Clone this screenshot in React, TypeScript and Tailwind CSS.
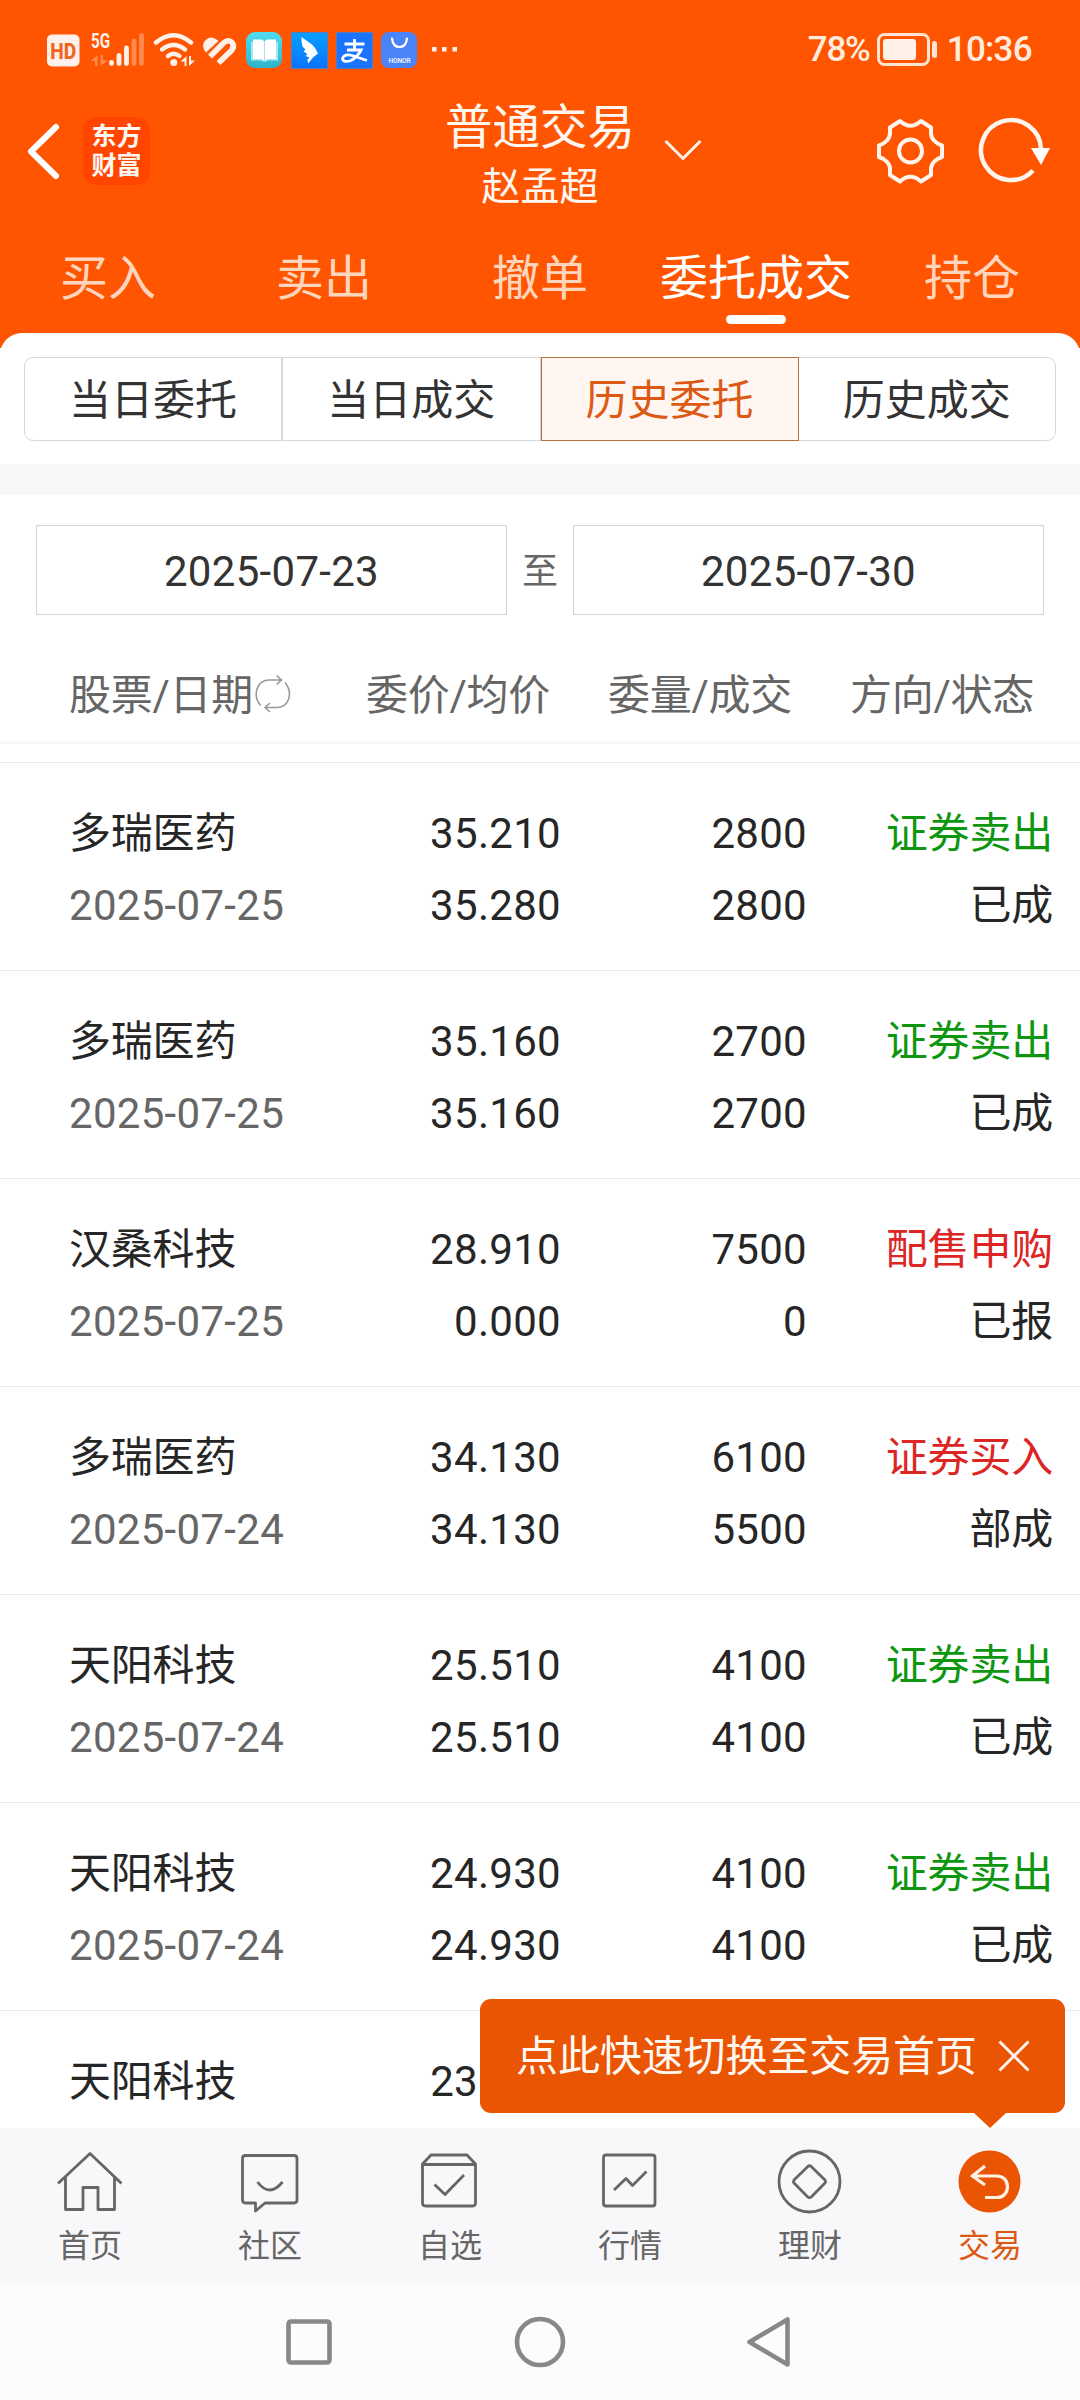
import clsx from "clsx";
import type { ReactNode } from "react";

type Order = {
  name: string;
  date?: string;
  price: string;
  avg?: string;
  amount?: string;
  filled?: string;
  side?: string;
  status?: string;
};

const TABS = ["买入", "卖出", "撤单", "委托成交", "持仓"];
const FILTERS = ["当日委托", "当日成交", "历史委托", "历史成交"];

const ORDERS: Order[] = [
  { name: "多瑞医药", date: "2025-07-25", price: "35.210", avg: "35.280", amount: "2800", filled: "2800", side: "证券卖出", status: "已成" },
  { name: "多瑞医药", date: "2025-07-25", price: "35.160", avg: "35.160", amount: "2700", filled: "2700", side: "证券卖出", status: "已成" },
  { name: "汉桑科技", date: "2025-07-25", price: "28.910", avg: "0.000", amount: "7500", filled: "0", side: "配售申购", status: "已报" },
  { name: "多瑞医药", date: "2025-07-24", price: "34.130", avg: "34.130", amount: "6100", filled: "5500", side: "证券买入", status: "部成" },
  { name: "天阳科技", date: "2025-07-24", price: "25.510", avg: "25.510", amount: "4100", filled: "4100", side: "证券卖出", status: "已成" },
  { name: "天阳科技", date: "2025-07-24", price: "24.930", avg: "24.930", amount: "4100", filled: "4100", side: "证券卖出", status: "已成" },
  { name: "天阳科技", price: "23" },
];

function StatusIcons() {
  return (
    <svg width="420" height="44" viewBox="44 28 420 44" fill="none">
      <rect x="47" y="34.500" width="32.500" height="32" rx="5" fill="#fff1ea" />
      <text x="63.300" y="58.500" textAnchor="middle" fontSize="21.500" fontWeight="800" fontFamily="Roboto" textLength="26" lengthAdjust="spacingAndGlyphs" fill="#f0641e">
        HD
      </text>
      <text x="91" y="48" fontSize="20" fontWeight="700" fontFamily="Roboto" textLength="19" lengthAdjust="spacingAndGlyphs" fill="#fff1ea">
        5G
      </text>
      <path d="M91 61 97.500 55V66H95V61ZM100.500 55H103V60.500H108L100.500 66Z" fill="#ff8a4d" />
      <g strokeWidth="4.800" strokeLinecap="round" stroke="#fff1ea">
        <path d="M111.500 62.500V63.500M119 55.500V63.500M126.500 48V63.500" />
        <path d="M134 41V63.500M141.500 35.500V63.500" stroke="#ff8a4d" />
      </g>
      <g stroke="#fff1ea" strokeWidth="4.400" strokeLinecap="round">
        <path d="M156 42.500Q173.500 28 191 42.500" />
        <path d="M162 49.500Q173.500 40.500 185 49.500" />
        <path d="M168 56Q173.500 51.500 179.500 56" />
      </g>
      <circle cx="173.800" cy="62.500" r="3.500" fill="#fff1ea" />
      <path d="M180.500 61.500 186.500 56V66H184.500V61.500ZM189 56H191V60.500H195L189 66Z" fill="#fff1ea" />
      <path d="M206 52.500Q201.500 47.500 204 42Q209.500 34.500 216.500 39.500L218.500 41Z" fill="#fff1ea" />
      <path d="M210 56.500 223 43.500Q228.500 38.500 232 42.500Q235 46.500 231.500 50.500L218.500 63" stroke="#fff1ea" strokeWidth="5.600" />
      <path d="M214.500 60.500 227.500 47.500" stroke="#ff5500" strokeWidth="2" />
      <defs>
        <linearGradient id="book" x2="0" y2="1">
          <stop stopColor="#50dcf0" />
          <stop offset="1" stopColor="#2eb4c8" />
        </linearGradient>
        <linearGradient id="wing" x2="0" y2="1">
          <stop stopColor="#06a0ff" />
          <stop offset="1" stopColor="#0a72ff" />
        </linearGradient>
      </defs>
      <rect x="246" y="32" width="36" height="36" rx="9" fill="url(#book)" />
      <path d="M251 42V60.500H261L264.500 62 268 60.500H278V42Z" fill="#a5e8f2" />
      <path d="M253 39.500H262L264.500 41.500V61L262 59H253ZM276 39.500H267L264.500 41.500V61L267 59H276Z" fill="#fff" />
      <path d="M264.500 41.500V61" stroke="#a9dfe8" />
      <rect x="291.500" y="32.500" width="36" height="36" fill="url(#wing)" stroke="#5a7ab8" />
      <path d="M301.500 37 312 44.500Q315.500 47.500 318 53.500L313.500 57 308 63.500 307.500 59.500 309.500 57.500 305.500 56 307.500 54 303.500 51.500 305.500 49.500 302.500 46.500Q301 41 301.500 37Z" fill="#fff" />
      <rect x="336.500" y="32.500" width="36" height="36" fill="#1a74ff" stroke="#5a7ab8" />
      <path d="M344.500 44H364.500M354.500 39V49.500M347 50H361Q357.500 57 351 60.500Q343 63 342.500 58.500Q344.500 53.500 352 55.500L367 60.500" stroke="#fff" strokeWidth="2.800" />
      <rect x="381" y="32" width="36" height="36" rx="8" fill="#4a84f8" />
      <path d="M392 38.500Q393 47 399.500 47T407 38.500" stroke="#fff" strokeWidth="2.200" strokeLinecap="round" />
      <text x="399.500" y="63" textAnchor="middle" fontSize="6.500" fontWeight="500" fontFamily="Roboto" textLength="22" fill="#fff">
        HONOR
      </text>
      <path d="M432 47H436.500V51.500H432ZM442 47H446.500V51.500H442ZM452.500 47H457V51.500H452.500Z" fill="#fff1ea" />
    </svg>
  );
}

function StatusBar() {
  return (
    <div className="flex h-[100px] items-center justify-between pr-[48px] pl-[44px] text-[35px] font-medium text-[#ffecdf]">
      <StatusIcons />
      <div className="flex items-center">
        <span className="tracking-[-1.2px]">78%</span>
        <svg className="ml-[6px]" width="62" height="36" viewBox="876 32 62 36" fill="none">
          <rect x="878.500" y="34.500" width="50" height="30" rx="6" stroke="#ffe3d3" strokeWidth="3" />
          <rect x="883" y="39" width="33" height="21" rx="3" fill="#fff1ea" />
          <rect x="932" y="41" width="5" height="17" rx="2.500" fill="#ffe3d3" />
        </svg>
        <span className="ml-[9px] tracking-[-0.7px]">10:36</span>
      </div>
    </div>
  );
}

function GearIcon() {
  return (
    <svg width="70" height="70" viewBox="876 116 70 70" fill="none" stroke="#fff5ee" strokeWidth="4" strokeLinejoin="round">
      <path d="M900 121Q910.500 130.500 921 121L931 127.500V133C931 139 936 143.500 942 145.500V157C936 159 931 163.500 931 169V175L921 181.500Q910.500 172 900 181.500L890 175V169C890 163.500 885 159 879 157V145.500C885 143.500 890 139 890 133V127.500Z" />
      <circle cx="910.500" cy="151" r="11.500" />
    </svg>
  );
}

function ReloadIcon() {
  return (
    <svg width="76" height="70" viewBox="976 116 76 70" fill="none">
      <path d="M1033 170.500A30 30 0 1 1 1041 149" stroke="#fff5ee" strokeWidth="4.500" />
      <path d="M1031 148H1050L1041 165Z" fill="#fff" />
    </svg>
  );
}

function TitleBar() {
  return (
    <div className="flex h-[130px] justify-between pr-[28px] pl-[25px] text-[#fff8f2]">
      <div className="flex w-[300px] gap-[21px]">
        <svg className="mt-[20px]" width="37" height="64" viewBox="0 0 37 64" fill="none" stroke="#fff" strokeWidth="6" strokeLinecap="round" strokeLinejoin="round">
          <path d="M31 7 6 31.500 31 56" />
        </svg>
        <div className="mt-[17px] flex h-[68px] w-[67px] flex-col items-center justify-center rounded-[13px] bg-[#ff4500] text-[25px] leading-[29px] font-bold">
          <span>东方</span>
          <span>财富</span>
        </div>
      </div>
      <div className="flex flex-1 flex-col items-center">
        <div className="relative mt-[-2px] text-[47.500px] leading-[60px]">
          普通交易
          <svg className="absolute top-[39px] left-[218px]" width="40" height="26" viewBox="0 0 40 26" fill="none" stroke="#fff5ee" strokeWidth="3">
            <path d="M2.500 4 20 21.500 37.500 4" />
          </svg>
        </div>
        <div className="mt-[1px] text-[39px] leading-[56px]">赵孟超</div>
      </div>
      <div className="flex w-[297px] justify-end gap-[30px] pt-[16px]">
        <GearIcon />
        <ReloadIcon />
      </div>
    </div>
  );
}

function MainTabs() {
  return (
    <div className="grid h-[118px] grid-cols-5 text-[48px] leading-[60px] text-[#ffd5bd]">
      {TABS.map((tab) => {
        const active = tab === "委托成交";
        return (
          <div key={tab} className={clsx("flex flex-col items-center pt-[19px]", active && "text-white")}>
            <span>{tab}</span>
            {active && <span className="mt-[6px] h-[9px] w-[60px] rounded-full bg-white" />}
          </div>
        );
      })}
    </div>
  );
}

function FilterBar() {
  return (
    <div className="flex h-[84px] text-[42px] text-[#333]">
      {FILTERS.map((label, i) => (
        <div
          key={label}
          className={clsx(
            "flex flex-1 items-center justify-center border pt-[3px]",
            i === 2 ? "border-[#b5713f] bg-[#fff6f2] text-[#dc5a14]" : "border-[#d6d8da]",
            i === 0 && "rounded-l-[9px]",
            i === 3 && "rounded-r-[9px] border-l-0"
          )}
        >
          {label}
        </div>
      ))}
    </div>
  );
}

function DateRange() {
  return (
    <div className="flex h-[90px] items-center justify-between px-[36px] text-[42px] tracking-[0.3px] text-[#333]">
      <div className="flex h-full w-[471px] items-center justify-center border border-[#d4d4d4] pt-[2px]">2025-07-23</div>
      <span className="pt-[4px] text-[36px] tracking-normal text-[#666]">至</span>
      <div className="flex h-full w-[471px] items-center justify-center border border-[#d4d4d4] pt-[2px]">2025-07-30</div>
    </div>
  );
}

function SwapIcon() {
  return (
    <svg className="mb-[2px] ml-[1px]" width="38" height="40" viewBox="0 0 38 40" fill="none" stroke="#999" strokeWidth="1.600">
      <path d="M6.500 31.500C-2 21 3 6 15.500 6H27M22.500 1.500 27.500 6 22.500 10.500" />
      <path d="M31 8.500C39.500 19 35 33.500 22.500 33.500H11M16 29 11 33.500 16 38" />
    </svg>
  );
}

function TableHead() {
  return (
    <div className="flex h-[129px] items-center border-b-3 border-[#f5f7f8] pt-[34px] text-[42px] tracking-[-0.3px] text-[#666]">
      <div className="flex w-[366px] items-center pl-[69px]">
        股票/日期
        <SwapIcon />
      </div>
      <div className="w-[242px]">委价/均价</div>
      <div className="w-[242px]">委量/成交</div>
      <div>方向/状态</div>
    </div>
  );
}

function OrderRow({ order }: { order: Order }) {
  return (
    <div className="grid h-[208px] shrink-0 grid-cols-[280px_281px_246px_246px] border-t border-[#ebebeb] pt-[35px] text-right text-[42px] leading-[72px] text-[#262626]">
      <div className="pl-[69px] text-left whitespace-nowrap">
        <div className="tracking-[-0.2px]">{order.name}</div>
        <div className="tracking-[0.3px] text-[#666]">{order.date}</div>
      </div>
      <div className="tracking-[0.3px]">
        {/* the last price is cut off by the tip bubble */}
        <div className={clsx(!order.avg && "pr-[83px]")}>{order.price}</div>
        <div>{order.avg}</div>
      </div>
      <div className="tracking-[0.3px]">
        <div>{order.amount}</div>
        <div>{order.filled}</div>
      </div>
      <div className="tracking-[-0.2px]">
        <div className={order.side?.endsWith("卖出") ? "text-[#0f9610]" : "text-[#dc2626]"}>{order.side}</div>
        <div>{order.status}</div>
      </div>
    </div>
  );
}

function Tip() {
  return (
    <div className="absolute right-[15px] bottom-[15px] flex h-[114px] w-[585px] items-center rounded-[11px] bg-[#ea5504] pl-[36px] text-[42px] text-[#fff8f2]">
      <span className="pt-[1px] tracking-[-0.1px]">点此快速切换至交易首页</span>
      <svg className="ml-[21px]" width="32" height="32" viewBox="0 0 32 32" stroke="#fff5ee" strokeWidth="3">
        <path d="M1.500 1.500 30.500 30.500M30.500 1.500 1.500 30.500" />
      </svg>
      <svg className="absolute top-full left-[494px]" width="32" height="15" viewBox="0 0 32 15" fill="#ea5504">
        <path d="M0 0H32L16 15Z" />
      </svg>
    </div>
  );
}

function NavItem({ label, active, children }: { label: string; active?: boolean; children: ReactNode }) {
  return (
    <div className={clsx("flex flex-1 flex-col items-center pt-[18px]", active ? "text-[#dc5a14]" : "text-[#666]")}>
      <svg width="70" height="72" viewBox="0 0 70 72" fill="none" stroke="currentColor" strokeWidth="2.800" strokeLinejoin="round">
        {children}
      </svg>
      <span className="mt-[4px] text-[32px] leading-[48px]">{label}</span>
    </div>
  );
}

function BottomNav() {
  return (
    <div className="flex h-[156px] bg-[#f8f7fa]">
      <NavItem label="首页">
        <path d="M3 37.500 35 7.500 66.500 37.500M10.500 31V63.500H28V41.500H43V63.500H59.500V31" />
      </NavItem>
      <NavItem label="社区">
        <path d="M10.500 9.500H59Q62 9.500 62 12.500V54Q62 57 59 57H30L20.500 65V57H10.500Q7.500 57 7.500 54V12.500Q7.500 9.500 10.500 9.500Z" />
        <path d="M22.500 36Q34.500 52 47.500 36" />
      </NavItem>
      <NavItem label="自选">
        <path d="M16 9H52L60.500 18V57Q60.500 60 57.500 60H10.500Q7.500 60 7.500 57V18ZM7.500 18.500H60.500M19.500 38.500 30 48.500 49 29" />
      </NavItem>
      <NavItem label="行情">
        <rect x="8.500" y="9" width="51.500" height="51" rx="2.500" />
        <path d="M19 44 31 32.500 37.500 39.500 51.500 25.500" />
      </NavItem>
      <NavItem label="理财">
        <circle cx="34.500" cy="35.500" r="30.500" />
        <path d="M32.800 20.500Q34.500 19 36.200 20.500L50 34Q51 35.500 50 37L36.200 51Q34.500 52.500 32.800 51L19 37Q18 35.500 19 34Z" />
      </NavItem>
      <NavItem label="交易" active>
        <circle cx="34.500" cy="35.500" r="31" fill="#ea5504" stroke="none" />
        <path d="M30 20 17.500 30 30 39M17.500 30H42C56 30 56 51.500 42 51.500H30" stroke="#fff1e6" strokeWidth="3.200" strokeLinejoin="miter" />
      </NavItem>
    </div>
  );
}

function SystemNav() {
  return (
    <div className="flex h-[116px] items-start justify-center bg-[#fcfcfc] pt-[30px]">
      <svg width="520" height="56" viewBox="280 2314 520 56" fill="none" stroke="#888" strokeWidth="4.600" strokeLinejoin="round">
        <rect x="288.500" y="2321.500" width="41" height="41" rx="2.500" />
        <circle cx="540" cy="2342" r="23" />
        <path d="M787.500 2319.500V2364.500L749.500 2342Z" />
      </svg>
    </div>
  );
}

export default function App() {
  return (
    <div className="flex h-[2400px] w-[1080px] flex-col overflow-hidden bg-white font-['Roboto','Noto_Sans_CJK_SC',sans-serif]">
      <header className="h-[348px] shrink-0 bg-[#ff5500]">
        <StatusBar />
        <TitleBar />
        <MainTabs />
      </header>
      <div className="mt-[-15px] rounded-t-[22px] bg-white px-[24px] pt-[24px] pb-[23px]">
        <FilterBar />
      </div>
      <div className="h-[31px] shrink-0 bg-[#f6f7f9]" />
      <div className="pt-[30px]">
        <DateRange />
      </div>
      <TableHead />
      <div className="relative min-h-0 flex-1">
        <div className="flex h-full flex-col overflow-hidden pt-[18px]">
          {ORDERS.map((order, i) => (
            <OrderRow key={i} order={order} />
          ))}
        </div>
        <Tip />
      </div>
      <BottomNav />
      <SystemNav />
    </div>
  );
}
